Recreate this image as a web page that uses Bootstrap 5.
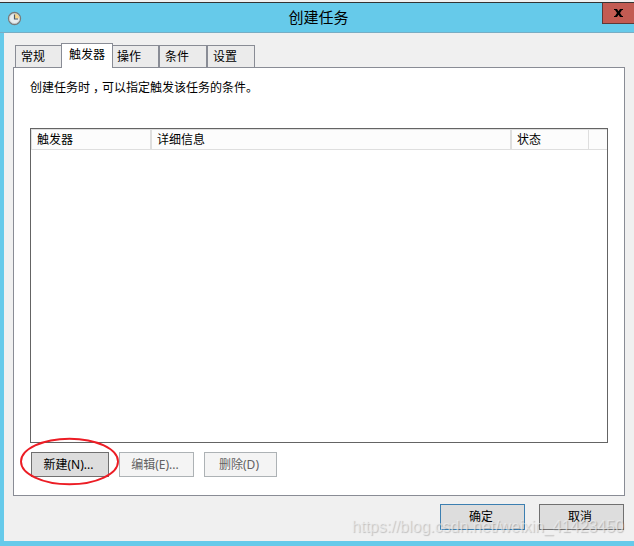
<!DOCTYPE html>
<html lang="zh-CN">
<head>
<meta charset="utf-8">
<meta name="viewport" content="width=device-width, initial-scale=1">
<title>创建任务</title>
<link href="https://cdn.jsdelivr.net/npm/bootstrap@5.3.0/dist/css/bootstrap.min.css" rel="stylesheet">
<style>
body{font-family:"Noto Sans","Noto Sans CJK SC",sans-serif;font-size:12px;line-height:16px;color:#000;background:#f0f0f0;overflow:hidden}
.win{width:634px;height:546px;padding-top:2px}
.titlebar{height:31px;background:#66caea;border-top:1px solid #333;border-bottom:1px solid #78adc4}
.clock{margin:8px 0 0 7px;width:15px;height:15px}
.caption{font-size:15px;line-height:28px;padding-left:13px}
.close-box{width:32px;height:21px;background:#c35b52;border:solid #603836;border-width:0 0 1px 1px;padding:0;border-radius:0}
.close-box svg{margin-top:6px}
.client{border-left:4px solid #66caea;border-bottom:5px solid #66caea;background:#f0f0f0;padding:10px 9px 0}
.tabs{height:25px;padding-left:2px;position:relative;z-index:1;border:0}
.tabs .nav-link{height:22px;margin:2px 0 0;width:48px;padding:2px 0 0 5px;border:1px solid #898c95;border-bottom:0;border-radius:0;background:#ebebeb;color:#000;line-height:17px}
.tabs .nav-link.first-tab{width:46px;border-right:0}
.tabs .nav-link.after-active{width:46px;border-left:0;padding-left:4px}
.tabs .nav-link.active{height:25px;width:52px;margin:0;padding:2px 0 0 7px;background:#fff;border-color:#898c95}
.panel{height:429px;width:612px;margin-top:-1px;border:1px solid #898c95;background:#fff;padding:12px 16px 0}
.hint{height:16px}
.comma{display:inline-block;width:12px;text-indent:3px;line-height:1;white-space:nowrap}
.listbox{height:315px;width:578px;margin-top:32px;border:1px solid #646464}
.headrow{height:21px;background:#fcfcfc;border:solid #dedede;border-width:1px 0 1px 1px;line-height:20px}
.headrow div{padding-left:5px;border-right:2px solid #dedede}
.headrow .c1{width:120px}.headrow .c2{width:360px}.headrow .c3{width:77px;border-right-width:1px}
.tools{margin:9px 0 0 1px;width:246px}
.dlg{border:1px solid #707070;border-radius:0;background:#ddd;color:#000;font-size:12px;line-height:16px;height:25px;padding:0 3px 0 0}
.dlg:disabled{border-color:#adb2b5;background:#f4f4f4;color:#626262;opacity:1}
.w-new{width:78px}.w-edit{width:75px}.w-del{width:73px}
.foot{margin-top:8px;gap:14px;padding-right:1px}
.foot .dlg{width:85px;height:26px}
.foot .ok{border-color:#3c7fb1}
.ring{position:absolute;left:19px;top:437px;z-index:2}
.stamp{position:absolute;right:10px;top:517px;font:16px/20px "Liberation Sans",sans-serif;color:rgba(240,240,240,.65);text-shadow:1px 1px 1px rgba(0,0,0,.2);white-space:nowrap;z-index:3}
</style>
<script src="https://cdn.jsdelivr.net/npm/bootstrap@5.3.0/dist/js/bootstrap.bundle.min.js"></script>
</head>
<body>
<main class="win d-flex flex-column position-relative">
  <header class="titlebar d-flex">
    <svg class="clock flex-shrink-0" viewBox="0 0 15 15"><circle cx="7.5" cy="7.5" r="6" fill="#e9eef0" stroke="#777b7b" stroke-width="1.3"/><path d="M7.5 7.5V2.4a5.1 5.1 0 0 1 5.1 5.1z" fill="#f8d68b"/><circle cx="7.5" cy="7.5" r="5" fill="none" stroke="#b9c4ca" stroke-width=".6"/><path d="M7.5 3.5v4.5h3.5" fill="none" stroke="#4a5a68" stroke-width="1.2"/></svg>
    <div class="caption flex-grow-1 text-center">创建任务</div>
    <button class="close-box btn d-flex justify-content-center" aria-label="关闭"><svg width="9" height="8" viewBox="0 0 9 8"><path d="M0 0H3L4.5 2.2 6 0H9V1H8L6 4 8 7H9V8H6L4.5 5.8 3 8H0V7H1L3 4 1 1H0Z" fill="#000"/></svg></button>
  </header>
  <section class="client flex-grow-1">
    <nav class="tabs nav nav-tabs">
      <a class="nav-link first-tab">常规</a>
      <a class="nav-link active">触发器</a>
      <a class="nav-link after-active">操作</a>
      <a class="nav-link">条件</a>
      <a class="nav-link">设置</a>
    </nav>
    <div class="panel">
      <div class="hint">创建任务时<span class="comma">，</span>可以指定触发该任务的条件。</div>
      <div class="listbox">
        <div class="headrow d-flex"><div class="c1">触发器</div><div class="c2">详细信息</div><div class="c3">状态</div></div>
      </div>
      <div class="tools d-flex justify-content-between">
        <button class="btn dlg w-new">新建(N)...</button>
        <button class="btn dlg w-edit" disabled>编辑(E)...</button>
        <button class="btn dlg w-del" disabled>删除(D)</button>
      </div>
    </div>
    <div class="foot d-flex justify-content-end">
      <button class="btn dlg ok">确定</button>
      <button class="btn dlg">取消</button>
    </div>
  </section>
  <svg class="ring" width="101" height="49"><ellipse cx="50.5" cy="24.5" rx="48.5" ry="22.8" fill="none" stroke="#ec1c24" stroke-width="1.9"/></svg>
  <div class="stamp">https://blog.csdn.net/weixin_41423450</div>
</main>
</body>
</html>
